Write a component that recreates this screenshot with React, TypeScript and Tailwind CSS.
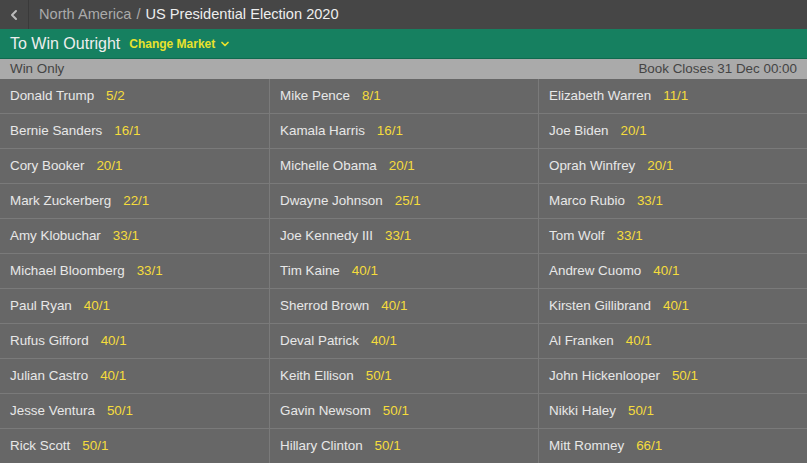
import { ChevronLeft, ChevronDown } from 'lucide-react'

const runners: [string, string][] = [
  ['Donald Trump', '5/2'],
  ['Mike Pence', '8/1'],
  ['Elizabeth Warren', '11/1'],
  ['Bernie Sanders', '16/1'],
  ['Kamala Harris', '16/1'],
  ['Joe Biden', '20/1'],
  ['Cory Booker', '20/1'],
  ['Michelle Obama', '20/1'],
  ['Oprah Winfrey', '20/1'],
  ['Mark Zuckerberg', '22/1'],
  ['Dwayne Johnson', '25/1'],
  ['Marco Rubio', '33/1'],
  ['Amy Klobuchar', '33/1'],
  ['Joe Kennedy III', '33/1'],
  ['Tom Wolf', '33/1'],
  ['Michael Bloomberg', '33/1'],
  ['Tim Kaine', '40/1'],
  ['Andrew Cuomo', '40/1'],
  ['Paul Ryan', '40/1'],
  ['Sherrod Brown', '40/1'],
  ['Kirsten Gillibrand', '40/1'],
  ['Rufus Gifford', '40/1'],
  ['Deval Patrick', '40/1'],
  ['Al Franken', '40/1'],
  ['Julian Castro', '40/1'],
  ['Keith Ellison', '50/1'],
  ['John Hickenlooper', '50/1'],
  ['Jesse Ventura', '50/1'],
  ['Gavin Newsom', '50/1'],
  ['Nikki Haley', '50/1'],
  ['Rick Scott', '50/1'],
  ['Hillary Clinton', '50/1'],
  ['Mitt Romney', '66/1'],
]

export default function App() {
  return (
    <div className="w-[807px] h-[463px] overflow-hidden bg-[#676767] font-['Liberation_Sans',Arial,sans-serif]">
      {/* breadcrumb */}
      <div className="flex h-[29px] bg-[#464646]">
        <div className="flex w-[29px] items-center justify-center border-r border-[#3a3a3a] text-[#bbb]">
          <ChevronLeft className="w-4 h-4" strokeWidth={3} />
        </div>
        <div className="flex items-center pl-[10px] text-[14.6px] text-[#aaa]">
          North America
          <span className="mx-[5px]">/</span>
          <span className="text-[#eee]">US Presidential Election 2020</span>
        </div>
      </div>

      {/* market header */}
      <div className="flex h-[30px] items-center bg-[#168060] px-[10px] border-b border-[#0f6a4e]">
        <span className="text-[16px] text-[#eee]">To Win Outright</span>
        <span className="ml-[9px] flex items-center text-[12px] font-bold text-[#e8e22c]">
          Change Market
          <ChevronDown className="ml-[4px] w-3 h-3" strokeWidth={3.5} />
        </span>
      </div>

      <div className="flex h-[20px] items-center justify-between bg-[#aaa] px-[10px] text-[13.4px] text-[#444]">
        <span>Win Only</span>
        <span>Book Closes 31 Dec 00:00</span>
      </div>

      <div className="grid grid-cols-[269px_269px_269px]">
        {runners.map(([name, odds], i) => (
          <div
            key={name}
            className={`flex h-[35px] items-center gap-[12px] pl-[10px] border-b border-[#7a7a7a] text-[13.4px] ${i % 3 === 0 ? '' : 'border-l'}`}
          >
            <span className="text-[#e8e8e8]">{name}</span>
            <span className="text-[#f5dc3c]">{odds}</span>
          </div>
        ))}
      </div>
    </div>
  )
}
